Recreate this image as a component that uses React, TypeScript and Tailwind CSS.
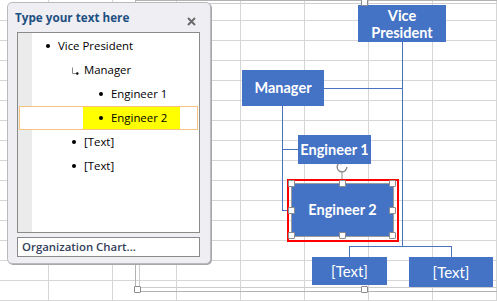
import React from 'react';

const diagramFont = { fontFamily: 'Lato, "Open Sans", sans-serif' };
const paneFont = { fontFamily: '"Open Sans", "Noto Sans", sans-serif' };

function Sheet() {
    return (
        <div className="grid grid-cols-[49px_repeat(7,64px)] grid-rows-[21px_repeat(14,20px)]">
            {Array.from({ length: 8 * 15 }).map((_, i) => (
                <div key={i} className="border-r border-b border-[#d6d6d6]" />
            ))}
        </div>
    );
}

function Handle({ className }: { className: string }) {
    return <div className={`absolute w-[7px] h-[7px] bg-white border border-[#8c8c8c] rounded-[1px] ${className}`} />;
}

function Node({ className, children }: { className: string; children: React.ReactNode }) {
    return (
        <div
            className={`absolute flex items-center justify-center bg-[#4472c4] text-white text-center whitespace-nowrap ${className}`}
            style={diagramFont}
        >
            {children}
        </div>
    );
}

function Connectors() {
    return (
        <svg className="absolute inset-0 pointer-events-none" width="497" height="301" viewBox="0 0 497 301">
            <g stroke="#4a72be" strokeWidth="1" fill="none" shapeRendering="crispEdges">
                <path d="M402.5 42 V246.5" />
                <path d="M324 88.5 H402.5" />
                <path d="M282.5 106 V210.5 H292" />
                <path d="M282.5 149.5 H298" />
                <path d="M349.5 257 V246.5 H451.5 V257" />
            </g>
            {/* rotate handle */}
            <g stroke="#8a8a8a" strokeWidth="1.4" fill="none">
                <path d="M346.8 167 A4.8 4.8 0 1 1 342 162.2" />
                <path d="M340.4 160.2 L342.6 162.2 L340.4 164.2" />
                <path d="M342 172 V183" strokeWidth="1" />
            </g>
        </svg>
    );
}

function Bullet() {
    return <span className="w-[4px] h-[4px] rounded-full bg-black shrink-0" />;
}

function TextPane() {
    return (
        <div
            className="absolute left-[7px] top-[2px] w-[204px] h-[262px] rounded-[5px] border border-[#b9b9c0] bg-[#eeeef3] shadow-[1px_1px_0_#a8a8a8] flex flex-col pl-[9px] pr-[10px]"
            style={paneFont}
        >
            <div className="h-[29px] flex items-start justify-between">
                <span className="mt-[6px] -ml-[2px] text-[11.7px] font-bold text-[#1e4f82]">Type your text here</span>
                <svg className="mt-[14px] mr-[4px]" width="9" height="9" viewBox="0 0 9 9">
                    <path d="M1 1 L8 8 M8 1 L1 8" stroke="#6a6a6a" strokeWidth="1.9" />
                </svg>
            </div>

            <div className="h-[201px] border border-[#8a8a8a] bg-white flex">
                <div className="w-[14px] bg-[#ebebeb] shrink-0" />
                <div className="flex-1 pt-px text-[11.4px] text-black">
                    <div className="h-6 flex items-center pl-[14px] gap-[8px]">
                        <Bullet />
                        <span>Vice President</span>
                    </div>
                    <div className="h-6 flex items-center pl-[39px] gap-[5px]">
                        <svg width="8" height="8" viewBox="0 0 8 8" className="mt-[2px]">
                            <path d="M1.5 0.5 V6.5 H5" stroke="#8a8a8a" strokeWidth="1" fill="none" />
                            <circle cx="6.3" cy="6.5" r="1.2" fill="#000" />
                        </svg>
                        <span>Manager</span>
                    </div>
                    <div className="h-6 flex items-center pl-[67px] gap-[8px]">
                        <Bullet />
                        <span>Engineer 1</span>
                    </div>
                    <div className="h-6 -ml-[13px] mr-px border border-[#f6c27f] bg-white flex pl-[63px]">
                        <div className="w-[97px] bg-[#ffff00] flex items-center pl-[16px] gap-[8px]">
                            <Bullet />
                            <span>Engineer 2</span>
                        </div>
                    </div>
                    <div className="h-6 flex items-center pl-[40px] gap-[8px]">
                        <Bullet />
                        <span>[Text]</span>
                    </div>
                    <div className="h-6 flex items-center pl-[40px] gap-[8px]">
                        <Bullet />
                        <span>[Text]</span>
                    </div>
                </div>
            </div>

            <div className="mt-[4px] h-[20px] border border-[#8a8a8a] bg-white flex items-center pl-[4px]">
                <span className="text-[11.4px] font-semibold text-[#33405a]">Organization Chart...</span>
            </div>
        </div>
    );
}

export default function App() {
    return (
        <div className="relative w-[497px] h-[301px] overflow-hidden bg-white">
            <Sheet />

            {/* SmartArt frame */}
            <div className="absolute left-[135px] top-0 w-[420px] h-[292px] border border-[#b3b3b3]" />
            <div className="absolute left-[139px] top-[3px] w-[420px] h-[285px] border border-[#cdcdcd]" />

            <Connectors />

            <Node className="left-[358px] top-[5px] w-[88px] h-[37px] flex-col font-bold text-[14.5px] leading-[17px]">
                <span>Vice</span>
                <span>President</span>
            </Node>
            <Node className="left-[242px] top-[70px] w-[82px] h-[36px] font-bold text-[14.5px]">Manager</Node>
            <Node className="left-[298px] top-[135px] w-[73px] h-[29px] font-bold text-[14.5px]">Engineer 1</Node>

            {/* selected shape */}
            <div className="absolute left-[287px] top-[179px] w-[112px] h-[63px] border-2 border-[#ff0000]" />
            <div className="absolute left-[291px] top-[183px] w-[103px] h-[54px] border border-[#9c9c9c]" />
            <Node className="left-[292px] top-[184px] w-[101px] h-[52px] font-bold text-[14.5px]">Engineer 2</Node>
            <Handle className="left-[288px] top-[180px]" />
            <Handle className="left-[339px] top-[180px]" />
            <Handle className="left-[389px] top-[180px]" />
            <Handle className="left-[288px] top-[207px]" />
            <Handle className="left-[389px] top-[207px]" />
            <Handle className="left-[288px] top-[232px]" />
            <Handle className="left-[339px] top-[232px]" />
            <Handle className="left-[389px] top-[232px]" />

            <Node className="left-[312px] top-[257px] w-[75px] h-[28px] text-[15px]">[Text]</Node>
            <Node className="left-[409px] top-[257px] w-[84px] h-[30px] text-[15px]">[Text]</Node>

            {/* frame handles */}
            <Handle className="left-[361px] top-[-1px]" />
            <Handle className="left-[361px] top-[286px]" />
            <Handle className="left-[134px] top-[286px]" />

            <TextPane />
        </div>
    );
}
